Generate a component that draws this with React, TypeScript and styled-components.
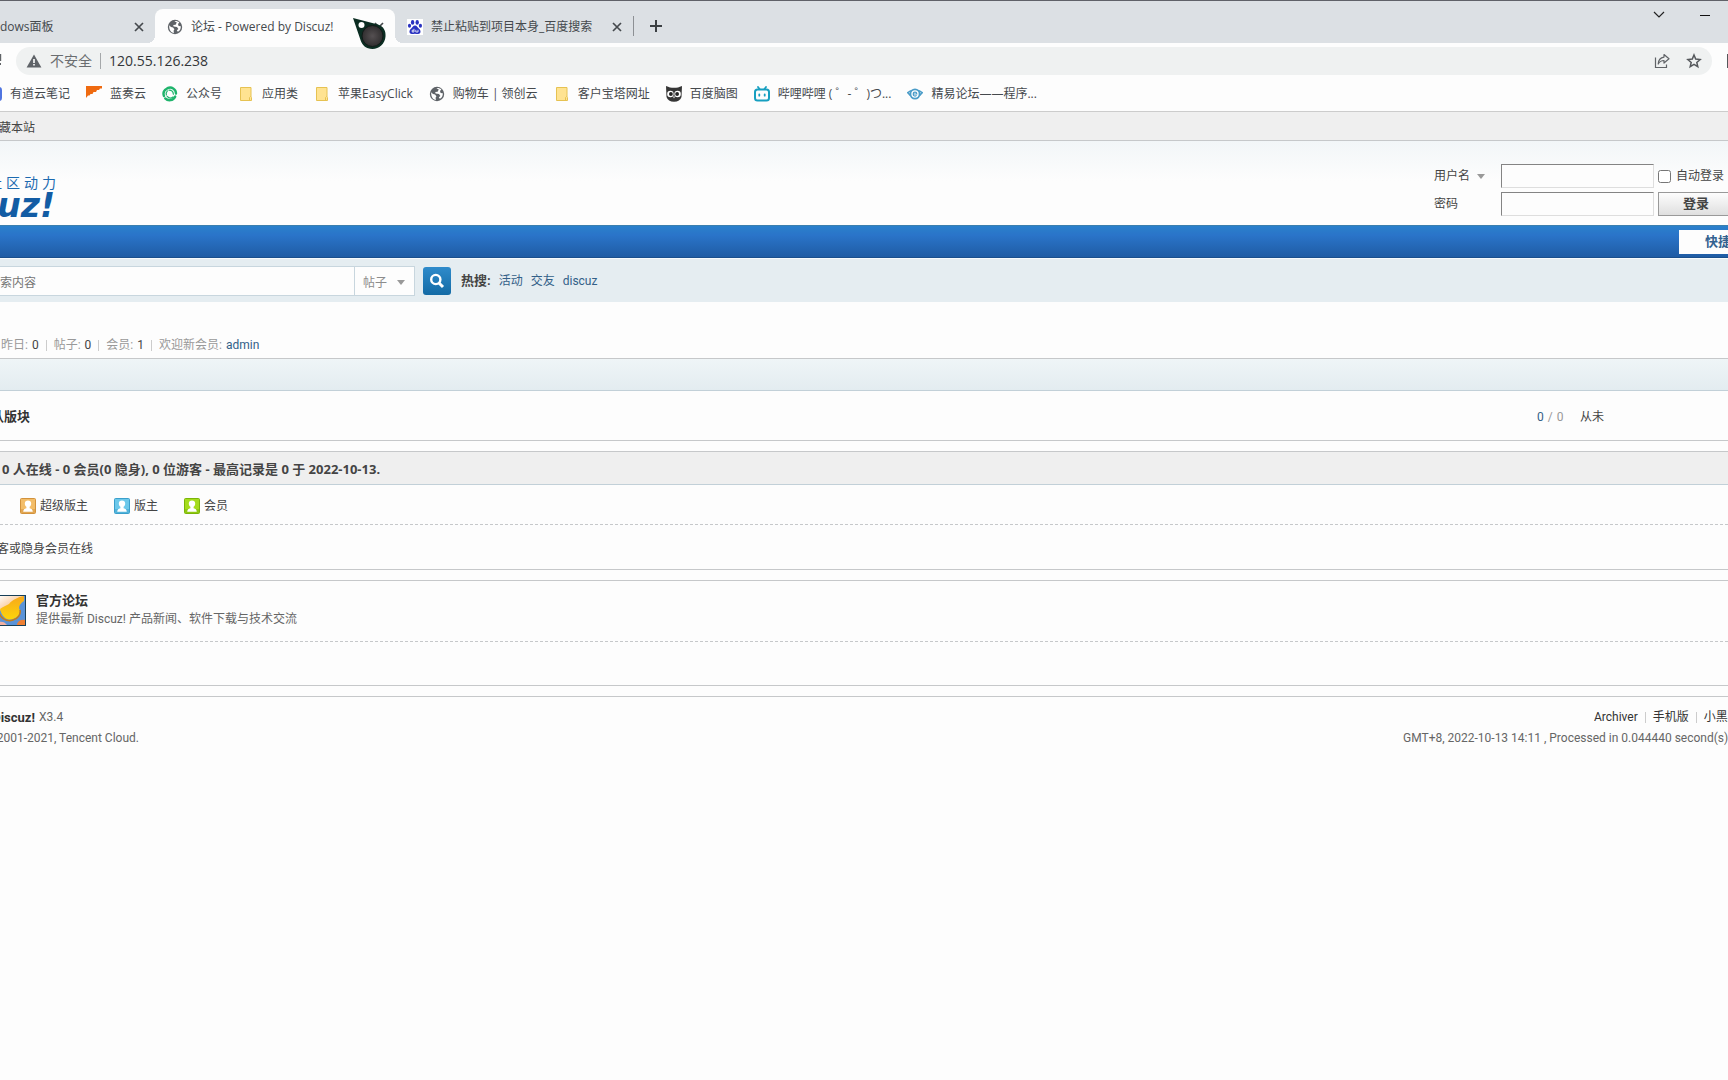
import React from "react";
import styled, { createGlobalStyle, css } from "styled-components";

const page = 'Roboto, "Noto Sans CJK SC", sans-serif';
const chrome = '"Open Sans", "Noto Sans CJK SC", sans-serif';
const heavy = '"Noto Sans", "Noto Sans CJK SC", sans-serif';

const GlobalStyle = createGlobalStyle`
  * { box-sizing: border-box; }
  html, body { margin: 0; background: #fdfdfd; overflow-x: hidden; }
  button, input, select { font: inherit; color: inherit; margin: 0; }
  a { color: inherit; text-decoration: none; }
  svg { flex: none; }
`;

const Page = styled.div`
  overflow: hidden;
  font: 12px/20px ${page};
  color: #444;
  white-space: nowrap;
`;

/* Cell whose content runs out past its left edge */
const Cell = styled.div<{ $w: number }>`
  display: flex;
  flex: none;
  justify-content: flex-end;
  width: ${(p) => p.$w}px;
  overflow: hidden;
`;

/* ---------- browser window ---------- */
const TabStrip = styled.div`
  display: flex;
  align-items: flex-end;
  height: 43px;
  border-top: 1px solid #606168;
  background: #dce0e4;
  font-family: ${chrome};
  color: #45494d;
`;
const Tab = styled.div<{ $w: number; $active?: boolean; $flush?: boolean }>`
  display: flex;
  flex: none;
  align-items: center;
  gap: 8px;
  width: ${(p) => p.$w}px;
  height: 34px;
  padding: 1px 8px 0 ${(p) => (p.$flush ? 0 : 12)}px;
  border-radius: 8px 8px 0 0;
  ${(p) => p.$active && css`
    position: relative;
    background: #fdfdfd;
    &::before, &::after {
      content: "";
      position: absolute;
      bottom: 0;
      width: 8px;
      height: 8px;
    }
    &::before { left: -8px; background: radial-gradient(circle at 0 0, transparent 8px, #fdfdfd 8px); }
    &::after { right: -8px; background: radial-gradient(circle at 100% 0, transparent 8px, #fdfdfd 8px); }
  `}
`;
const TabTitle = styled.span`
  flex: 1;
`;
const IconButton = styled.button`
  display: flex;
  flex: none;
  align-items: center;
  justify-content: center;
  width: 16px;
  height: 16px;
  padding: 0;
  border: 0;
  background: none;
`;
const TabRule = styled.span`
  width: 1px;
  height: 20px;
  margin: 0 14px 7px 0;
  background: #8d9094;
`;
const NewTab = styled.div`
  display: flex;
  align-items: center;
  height: 34px;
`;
const WindowButtons = styled.div`
  display: flex;
  align-self: flex-start;
  gap: 30px;
  margin-left: auto;
  padding: 6px 15px 0 0;
`;
const Pointer = styled.svg`
  position: absolute;
  left: 197px;
  top: 8px;
`;

const Toolbar = styled.div`
  display: flex;
  align-items: center;
  height: 36px;
  font-family: ${chrome};
`;
const ToolbarStart = styled.div`
  display: flex;
  width: 16px;
`;
const Omnibox = styled.div`
  display: flex;
  flex: 1;
  align-items: center;
  gap: 8px;
  height: 28px;
  padding: 0 10px;
  border-radius: 14px;
  background: #eff1f1;
  font-size: 14px;
  color: #6a6d70;
`;
const OmniRule = styled.span`
  width: 1px;
  height: 16px;
  background: #a5a8aa;
`;
const Address = styled.input`
  flex: 1;
  min-width: 0;
  padding: 0;
  border: 0;
  outline: 0;
  background: none;
  color: #333639;
`;
const OmniActions = styled.div`
  display: flex;
  gap: 16px;
`;
const ToolbarEnd = styled.div`
  width: 16px;
  padding-left: 15px;
`;
const EdgeMark = styled.div`
  height: 14px;
  background: #55585b;
`;

const Bookmarks = styled.nav`
  display: flex;
  align-items: center;
  gap: 16px;
  height: 33px;
  padding-bottom: 2px;
  border-bottom: 1px solid #ccc;
  font-family: ${chrome};
  color: #45494d;
`;
const Bookmark = styled.a`
  display: flex;
  align-items: center;
  gap: 8px;
`;

/* ---------- forum ---------- */
const TopBar = styled.div`
  height: 29px;
  padding: 6px 0 0;
  border-bottom: 1px solid #c6c8ca;
  background: #efefef;
`;
const Header = styled.header`
  display: flex;
  justify-content: space-between;
  height: 84px;
  padding-top: 23px;
  background: linear-gradient(#f2f6f8, #fdfdfd 40px);
`;
const Login = styled.form`
  display: grid;
  flex: none;
  grid-template-columns: 63px 153px 70px;
  grid-auto-rows: 24px;
  gap: 4px;
  align-items: center;
`;
const UserType = styled.label`
  display: flex;
  align-items: center;
  gap: 7px;
`;
const TextBox = styled.input`
  width: 100%;
  height: 24px;
  border: 1px solid;
  border-color: #848484 #dedede #dedede #848484;
  background: #fdfdfd;
`;
const Remember = styled.label`
  display: flex;
  align-items: center;
  gap: 5px;
`;
const Tick = styled.input`
  width: 13px;
  height: 13px;
`;
const LoginButton = styled.button`
  width: 80px;
  height: 24px;
  padding: 0 0 0 24px;
  border: 1px solid #999;
  background: linear-gradient(#fdfdfd, #dfdfdf);
  font-size: 13px;
  font-weight: 700;
  line-height: 20px;
  text-align: left;
`;
const Caret = styled.span`
  border: 4px solid transparent;
  border-top: 5px solid #999;
  border-bottom: 0;
`;
const NavBar = styled.nav`
  display: flex;
  justify-content: flex-end;
  height: 33px;
  padding-top: 4px;
  border-top: 1px solid #3b7fae;
  border-bottom: 1px solid #1a4f8c;
  background: linear-gradient(#2a80cb, #2a74c9 30%, #1f5ca4);
`;
const QuickNav = styled.a`
  width: 49px;
  height: 24px;
  padding: 2px 0 0 26px;
  overflow: hidden;
  background: #fdfdfd;
  color: #336290;
  font-size: 13px;
  font-weight: 700;
`;
const SearchBar = styled.form`
  display: flex;
  align-items: center;
  height: 44px;
  border-top: 1px solid #f6fafc;
  background: #e5edf1;
`;
const SearchText = styled.input`
  width: 354px;
  height: 30px;
  padding: 4px 0 0;
  border: 1px solid #c8d6de;
  border-width: 1px 0;
  background: #fdfdfd;
  &::placeholder { color: #757575; }
`;
const SearchKind = styled.div`
  display: flex;
  align-items: center;
  width: 61px;
  height: 30px;
  padding: 4px 9px 0 8px;
  border: 1px solid #c8d6de;
  background: #fdfdfd;
`;
const KindSelect = styled.select`
  flex: 1;
  min-width: 0;
  padding: 0;
  border: 0;
  background: none;
  appearance: none;
  color: #8c8c8c;
`;
const SearchButton = styled.button`
  display: flex;
  align-items: center;
  justify-content: center;
  width: 28px;
  height: 28px;
  margin: 0 10px 0 8px;
  padding: 0;
  border: 0;
  border-radius: 3px;
  background: linear-gradient(#2f8bcb, #146ba5);
`;
const Hot = styled.div`
  display: flex;
  gap: 8px;
  color: #336088;
`;
const Strong = styled.strong<{ $tone?: string }>`
  color: ${(p) => p.$tone || "#444"};
  font-size: 13px;
`;
const Stats = styled.div`
  display: flex;
  height: 56px;
  padding: 33px 0 0 1px;
  color: #999;
`;
const Label = styled.span`
  margin-right: 4px;
`;
const Num = styled.em<{ $link?: boolean }>`
  font-style: normal;
  color: ${(p) => (p.$link ? "#336088" : "#444")};
`;
const Pipe = styled.span`
  width: 1px;
  height: 11px;
  margin: 5px 7px 0;
  background: #ccc;
`;
const Block = styled.section`
  margin-bottom: 10px;
  border: 1px solid #c6c8ca;
  border-width: 1px 0;
`;
const Category = styled.div`
  height: 32px;
  border-bottom: 1px solid #c2d0d8;
  background: linear-gradient(#eff5f7, #e3ecf0);
`;
const ForumRow = styled.div`
  display: flex;
  align-items: center;
  height: 49px;
  padding-top: 2px;
`;
const Counts = styled.div`
  display: flex;
  gap: 4px;
  width: 43px;
  margin-left: auto;
  color: #999;
`;
const LastPost = styled.div`
  width: 148px;
`;
const OnlineTitle = styled.h3`
  height: 33px;
  margin: 0;
  padding: 7px 0 0 2px;
  border-bottom: 1px solid #c2d0d8;
  background: #efefef;
  font: 700 13px/20px ${heavy};
`;
const Legend = styled.div`
  display: flex;
  align-items: flex-start;
  gap: 26px;
  height: 40px;
  padding: 11px 0 0 20px;
  border-bottom: 1px dashed #c6c8ca;
`;
const Role = styled.span`
  display: flex;
  align-items: center;
  gap: 4px;
`;
const OnlineNote = styled.div`
  display: flex;
  align-items: center;
  height: 44px;
  padding-top: 3px;
`;
const FriendRow = styled.div`
  display: flex;
  align-items: flex-start;
  gap: 10px;
  height: 61px;
  padding-top: 11px;
  border-bottom: 1px dashed #c6c8ca;
`;
const Banner = styled(Cell)`
  padding-top: 3px;
`;
const FriendText = styled.div`
  display: flex;
  flex-direction: column;
  line-height: 18px;
  color: #666;
`;
const FriendRest = styled.div`
  height: 43px;
`;
const Footer = styled.footer`
  display: flex;
  justify-content: space-between;
  padding-top: 10px;
  border-top: 1px solid #c6c8ca;
  color: #666;
  line-height: 21px;
`;
const Line = styled.div`
  display: flex;
  gap: 4px;
`;
const FooterEnd = styled.div`
  flex: none;
  width: 325px;
  overflow: hidden;
`;
const FooterLinks = styled.div`
  display: flex;
  padding-left: 191px;
  color: #333;
`;
const LinkPipe = styled(Pipe)`
  flex: none;
`;

const Cross = () => (
  <svg width="10" height="10" viewBox="0 0 10 10" stroke="#45494d" strokeWidth="1.7">
    <path d="M1 1l8 8M9 1l-8 8" />
  </svg>
);
const Globe = () => (
  <svg width="16" height="16" viewBox="0 0 16 16">
    <circle cx="8" cy="8" r="7.2" fill="#5f6368" />
    <path d="M2.2 6.2L4 8l2 .6 1.400 1.600-.8 1.600.3 2.200C4 13.500 2 11 2.200 6.200z" fill="#fff" />
    <path d="M7.500 2.200L9.800 3.600 8.600 5.800 6.200 6 6.600 7.600 10 8l1.400 2-1.600 1.200 1 1.600c2-1 3.200-3 3-5.600L11.600 7 11 5l1.400-1.400C11 2.300 9.200 1.800 7.500 2.200z" fill="#fff" />
  </svg>
);
const Paw = () => (
  <svg width="16" height="16" viewBox="0 0 16 16">
    <rect width="16" height="16" fill="#fff" />
    <g fill="#2932c1">
      <ellipse cx="5.600" cy="3.400" rx="1.700" ry="2.300" />
      <ellipse cx="10.200" cy="3.400" rx="1.700" ry="2.300" />
      <ellipse cx="2.500" cy="6.800" rx="1.600" ry="2" />
      <ellipse cx="13.400" cy="6.800" rx="1.600" ry="2" />
      <path d="M8 6.600c2 0 2.600 2 4 3.200 2.600 2.200 1.600 5.200-.8 5.200-1.200 0-2-.3-3.200-.3s-2 .3-3.200.3C2.400 15 1.400 12 4 9.800 5.400 8.600 6 6.600 8 6.600z" />
    </g>
    <path d="M7 9.800v3.200H5.200v-1.800H7M8.800 10.800V13h2.200v-2.200" fill="none" stroke="#fff" strokeWidth=".8" />
  </svg>
);
const Note = () => (
  <svg width="16" height="16" viewBox="0 0 16 16">
    <rect y="1" width="16" height="14" rx="3" fill="#4f74e0" />
  </svg>
);
const Lanzou = () => (
  <svg width="16" height="16" viewBox="0 0 16 16">
    <path d="M0 0h16v2.500h-2l-1 1.500h-2l-1 2H7.500l-1 2H4.500L3.500 9.500H2L0 12z" fill="#ef6a10" />
  </svg>
);
const Swirl = () => (
  <svg width="16" height="16" viewBox="0 0 16 16" fill="none" stroke="#1fb46c" strokeLinecap="round">
    <path d="M5.500 2.200C9.500.4 14 3 14 7.600" strokeWidth="2.400" />
    <path d="M13.200 10.600c-2 4-7 4.800-10 1.800" strokeWidth="2.400" />
    <path d="M2 10C.8 6.800 2 4.400 4.400 3" strokeWidth="2.400" />
    <path d="M7 4.200c2.600 0 4.200 1.600 4.400 4M11 11c-2 1.600-4.200 1.200-5.800-.6M4.400 9c-.6-1.600-.2-3 1-4.200" strokeWidth="1.200" />
  </svg>
);
const Folder = () => (
  <svg width="16" height="16" viewBox="0 0 16 16">
    <path d="M2.500 1.500h10.500v9.500l.5.500v3h-11z" fill="#ffe391" stroke="#e6c252" />
    <path d="M11.500 14v-2.500l1-1" fill="none" stroke="#e6c252" />
  </svg>
);
const Owl = () => (
  <svg width="16" height="16" viewBox="0 0 16 16">
    <path d="M0 0c3 1.400 5 1.800 8 1.800S13 1.400 16 0l-.5 11c-1 3-3.500 4.800-7.500 4.800S1.500 14 .5 11z" fill="#363636" />
    <circle cx="4.400" cy="8" r="3.200" fill="#fff" />
    <circle cx="11.600" cy="8" r="3.200" fill="#fff" />
    <circle cx="4.900" cy="8" r="1.900" fill="#222" />
    <circle cx="11.100" cy="8" r="1.900" fill="#222" />
    <path d="M7 10.500h2l-1 2z" fill="#fff" />
  </svg>
);
const Bili = () => (
  <svg width="16" height="16" viewBox="0 0 16 16" fill="none" stroke="#179fc0" strokeWidth="2" strokeLinecap="round">
    <rect x="1" y="3.500" width="14" height="11" rx="2.500" />
    <path d="M4 1l1.500 2M12 1l-1.500 2M5.300 8.300v1.400M10.700 8.300v1.400" strokeWidth="1.800" />
  </svg>
);
const Jingyi = () => (
  <svg width="16" height="16" viewBox="0 0 16 16" fill="none" stroke="#4a9cc8">
    <circle cx="8" cy="8" r="4.600" strokeWidth="1.800" />
    <path d="M4 4.600L.8 6.600l2.600 2.800M12 4.600l3.200 2-2.600 2.800" strokeWidth="1.600" />
    <path d="M6.200 8h3.600c0-2.400-3.600-2.400-3.600 0s2.400 2.400 3.400 1.400" strokeWidth="1.200" />
  </svg>
);
const Warning = () => (
  <svg width="16" height="16" viewBox="0 0 16 16">
    <path d="M8 1.500L15.400 14.500H.6z" fill="#5f6368" />
    <path d="M7.200 6h1.600v4H7.200zM7.200 11h1.600v1.600H7.200z" fill="#fff" />
  </svg>
);
const Share = () => (
  <svg width="16" height="16" viewBox="0 0 16 16" fill="none" stroke="#606367" strokeWidth="1.200">
    <path d="M1.500 4.500v10h11v-3" />
    <path d="M10 1.500l5 4.300-5 4.200V7.500C7.500 7.500 5.600 8.400 4.200 11c.2-3.800 2-6.400 5.800-6.900z" strokeLinejoin="round" />
  </svg>
);
const Star = () => (
  <svg width="16" height="16" viewBox="0 0 16 16" fill="none" stroke="#55585c" strokeWidth="1.500">
    <path d="M8 2l1.700 4.100 4.400.4-3.300 2.900 1 4.300L8 11.400l-3.800 2.300 1-4.300L1.900 6.500l4.400-.4z" />
  </svg>
);
const Person = ({ light, dark }: { light: string; dark: string }) => (
  <svg width="16" height="16" viewBox="0 0 16 16">
    <rect x=".5" y=".5" width="15" height="15" rx="1" fill={light} stroke={dark} />
    <path d="M1 11h14v4H1z" fill={dark} opacity=".5" />
    <path d="M8 2.500c2 0 3.200 1.200 3.200 3 0 1.600-.6 2.600-1.600 3.200v1.500c1.800.4 3.200 1.400 3.200 3.600H3.200c0-2.200 1.400-3.200 3.200-3.600V8.700c-1-.6-1.600-1.600-1.600-3.200 0-1.800 1.200-3 3.200-3z" fill="#fff" />
  </svg>
);
const ForumLogo = () => (
  <svg width="88" height="31" viewBox="0 0 88 31">
    <defs>
      <linearGradient id="sun" x1="0" y1="0" x2="0" y2="1">
        <stop offset="0" stopColor="#f7a81c" />
        <stop offset="1" stopColor="#fdd50a" />
      </linearGradient>
      <linearGradient id="glow" x1="0" y1="0" x2="1" y2="1">
        <stop offset="0" stopColor="#fff" />
        <stop offset="1" stopColor="#f6a04c" />
      </linearGradient>
    </defs>
    <rect width="88" height="31" fill="#5a93d8" />
    <path d="M60 1h26v4c-6 4-8 8-4 12l-22-2z" fill="url(#glow)" />
    <path d="M62 14c2 9 8 12 13 10 6-2 8-7 6-11 0-3 2-5 5-7V1c-6 1-12 4-15 8-3 2-7 3-9 5z" fill="url(#sun)" />
    <path d="M60 15c2 9 9 12 15 10 5-1 8-6 7-10" fill="none" stroke="#c97b16" strokeWidth="1.500" />
    <path d="M79 29c1-3 4-5 8-4v5h-8z" fill="#ee7f33" />
    <path d="M60 27c4-1 7 0 9 3h-9z" fill="#f3b0a0" />
    <rect x=".5" y=".5" width="87" height="30" fill="none" stroke="#173f58" />
  </svg>
);

const bookmarks: [string, React.FC][] = [
  ["蓝奏云", Lanzou],
  ["公众号", Swirl],
  ["应用类", Folder],
  ["苹果EasyClick", Folder],
  ["购物车 | 领创云", Globe],
  ["客户宝塔网址", Folder],
  ["百度脑图", Owl],
  ["哔哩哔哩 ( ゜- ゜)つ...", Bili],
  ["精易论坛——程序...", Jingyi],
];

const roles = [
  { name: "超级版主", light: "#f3bd68", dark: "#d2923c" },
  { name: "版主", light: "#6cc8ea", dark: "#3a9fcb" },
  { name: "会员", light: "#a5dc1c", dark: "#7bb508" },
];

const stats = [
  { name: "昨日:", value: "0" },
  { name: "帖子:", value: "0" },
  { name: "会员:", value: "1" },
];

const CloseTab = () => (
  <IconButton aria-label="关闭"><Cross /></IconButton>
);

export default function App() {
  return (
    <Page>
      <GlobalStyle />
      <TabStrip>
        <Tab $w={155} $flush>
          <TabTitle>dows面板</TabTitle>
          <CloseTab />
        </Tab>
        <Tab $w={240} $active>
          <Globe />
          <TabTitle>论坛 - Powered by Discuz!</TabTitle>
          <CloseTab />
          <Pointer width="36" height="34" viewBox="0 0 36 34">
            <defs>
              <radialGradient id="ball">
                <stop offset="0" stopColor="#555052" />
                <stop offset="1" stopColor="#302e2f" />
              </radialGradient>
            </defs>
            <path d="M1 1l25 6.500c6 2 8 7 7.500 12C33 27 27 32 20.500 32 14 32 10 28 8.500 23z" fill="#0b2d22" />
            <circle cx="20.500" cy="19" r="10.500" fill="url(#ball)" stroke="#101a17" />
            <circle cx="9.500" cy="8" r="3" fill="#fff" />
          </Pointer>
        </Tab>
        <Tab $w={238}>
          <Paw />
          <TabTitle>禁止粘贴到项目本身_百度搜索</TabTitle>
          <CloseTab />
        </Tab>
        <TabRule />
        <NewTab>
          <IconButton aria-label="新标签页">
            <svg width="12" height="12" viewBox="0 0 12 12" stroke="#3c4043" strokeWidth="2">
              <path d="M6 0v12M0 6h12" />
            </svg>
          </IconButton>
        </NewTab>
        <WindowButtons>
          <IconButton aria-label="搜索标签页">
            <svg width="12" height="8" viewBox="0 0 12 8" fill="none" stroke="#222" strokeWidth="1.200">
              <path d="M1 1l5 5 5-5" />
            </svg>
          </IconButton>
          <IconButton aria-label="最小化">
            <svg width="10" height="2" viewBox="0 0 10 2"><path d="M0 1h10v1H0z" fill="#111" /></svg>
          </IconButton>
        </WindowButtons>
      </TabStrip>
      <Toolbar>
        <ToolbarStart>
          <svg width="2" height="14" viewBox="0 0 2 14">
            <path d="M0 0h1.200v7H0zM0 9h1v2H0z" fill="#606367" />
          </svg>
        </ToolbarStart>
        <Omnibox>
          <Warning />
          <span>不安全</span>
          <OmniRule />
          <Address aria-label="地址" defaultValue="120.55.126.238" />
          <OmniActions>
            <IconButton aria-label="分享"><Share /></IconButton>
            <IconButton aria-label="收藏"><Star /></IconButton>
          </OmniActions>
        </Omnibox>
        <ToolbarEnd><EdgeMark /></ToolbarEnd>
      </Toolbar>
      <Bookmarks>
        <Cell $w={70}><Bookmark href="#"><Note />有道云笔记</Bookmark></Cell>
        {bookmarks.map(([name, Icon]) => (
          <Bookmark href="#" key={name}><Icon />{name}</Bookmark>
        ))}
      </Bookmarks>
      <TopBar><Cell $w={35}><a href="#">藏本站</a></Cell></TopBar>
      <Header>
        <svg width="60" height="56" viewBox="0 0 60 56">
          <text x="-12 6 24 42" y="24" fontSize="14" fill="#1c6ab0">社区动力</text>
          <text x="55" y="53" textAnchor="end" fontFamily="DejaVu Sans" fontWeight="700" fontStyle="italic" fontSize="33" fill="#125ca4">uz!</text>
        </svg>
        <Login>
          <UserType htmlFor="user">用户名<Caret /></UserType>
          <TextBox id="user" />
          <Remember><Tick type="checkbox" />自动登录</Remember>
          <label htmlFor="pass">密码</label>
          <TextBox id="pass" type="password" />
          <LoginButton type="button">登录</LoginButton>
        </Login>
      </Header>
      <NavBar><QuickNav href="#">快捷</QuickNav></NavBar>
      <SearchBar>
        <SearchText aria-label="搜索" placeholder="索内容" />
        <SearchKind>
          <KindSelect aria-label="类型"><option>帖子</option></KindSelect>
          <Caret />
        </SearchKind>
        <SearchButton type="button" aria-label="搜索">
          <svg width="16" height="16" viewBox="0 0 16 16" fill="none" stroke="#fff" strokeWidth="2.400">
            <circle cx="6.800" cy="6.500" r="4.600" />
            <path d="M10 10l4 4" strokeWidth="3" />
          </svg>
        </SearchButton>
        <Hot>
          <Strong>热搜:</Strong>
          <a href="#">活动</a>
          <a href="#">交友</a>
          <a href="#">discuz</a>
        </Hot>
      </SearchBar>
      <Stats>
        {stats.map((s) => (
          <React.Fragment key={s.name}>
            <Label>{s.name}</Label><Num>{s.value}</Num><Pipe />
          </React.Fragment>
        ))}
        <Label>欢迎新会员:</Label><Num $link>admin</Num>
      </Stats>
      <Block>
        <Category />
        <ForumRow>
          <Cell $w={30}><Strong $tone="#333">认版块</Strong></Cell>
          <Counts><Num $link>0</Num>/<span>0</span></Counts>
          <LastPost>从未</LastPost>
        </ForumRow>
      </Block>
      <Block>
        <OnlineTitle>0 人在线 - 0 会员(0 隐身), 0 位游客 - 最高记录是 0 于 2022-10-13.</OnlineTitle>
        <Legend>
          {roles.map((r) => (
            <Role key={r.name}><Person light={r.light} dark={r.dark} />{r.name}</Role>
          ))}
        </Legend>
        <OnlineNote><Cell $w={93}>客或隐身会员在线</Cell></OnlineNote>
      </Block>
      <Block>
        <FriendRow>
          <Banner $w={26}><ForumLogo /></Banner>
          <FriendText>
            <Strong $tone="#333">官方论坛</Strong>
            <span>提供最新 Discuz! 产品新闻、软件下载与技术交流</span>
          </FriendText>
        </FriendRow>
        <FriendRest />
      </Block>
      <Footer>
        <div>
          <Line>
            <Cell $w={35}><Strong as="b" $tone="#333">Discuz!</Strong></Cell>
            <span>X3.4</span>
          </Line>
          <Cell $w={139}>2001-2021, Tencent Cloud.</Cell>
        </div>
        <FooterEnd>
          <FooterLinks>
            <a href="#">Archiver</a><LinkPipe />
            <a href="#">手机版</a><LinkPipe />
            <a href="#">小黑屋</a>
          </FooterLinks>
          <div>GMT+8, 2022-10-13 14:11 , Processed in 0.044440 second(s)</div>
        </FooterEnd>
      </Footer>
    </Page>
  );
}
